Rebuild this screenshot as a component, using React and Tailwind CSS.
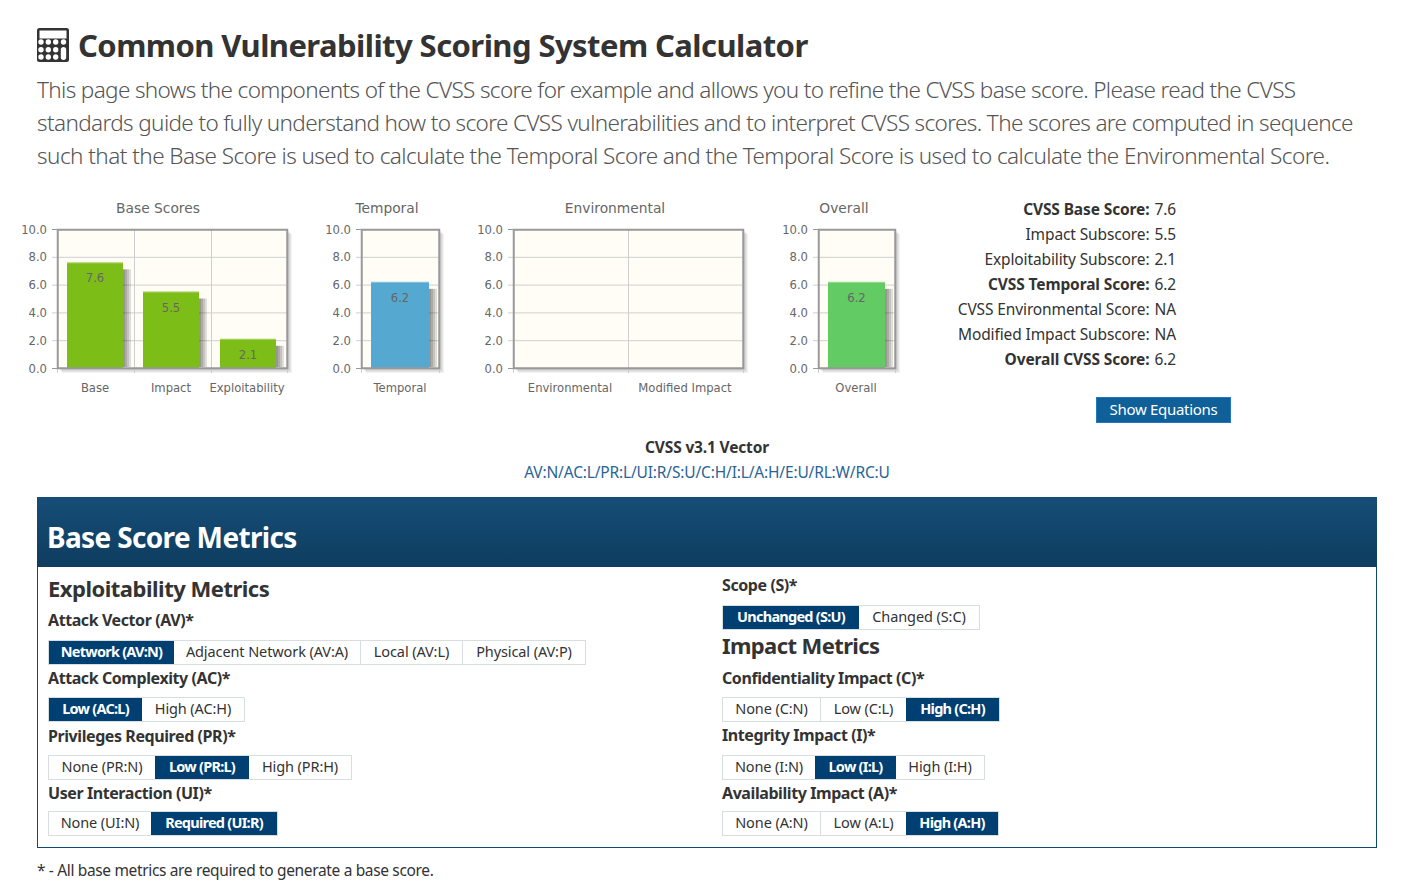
import React from 'react';

const axisTicks = ['10.0', '8.0', '6.0', '4.0', '2.0', '0.0'];

// plot area is 139px tall, 0 to 10
const Chart = ({ title, titleX, width, plotLeft, plotWidth, cols, bars = [] }) => {
  const top = 29;
  const h = 139;
  const right = plotLeft + plotWidth;
  return (
    <svg width={width} height={200} className="shrink-0 block" style={{ fontFamily: '"DejaVu Sans", sans-serif' }}>
      <text x={titleX} y={13} textAnchor="middle" fontSize="13.8" fill="#666">{title}</text>
      {[5, 4, 3, 2].map((o) => (
        <rect key={o} x={plotLeft + o} y={top + o} width={plotWidth} height={h} fill="#000" opacity="0.05" />
      ))}
      <rect x={plotLeft} y={top} width={plotWidth} height={h} fill="#fffdf6" />
      {axisTicks.map((t, i) => {
        const y = top + (h * i) / 5;
        return (
          <g key={t}>
            <line x1={plotLeft - 5} x2={right} y1={y + 0.5} y2={y + 0.5} stroke={i === 0 || i === 5 ? '#999' : '#cfcfcf'} />
            <text x={plotLeft - 10} y={y + 4.5} textAnchor="end" fontSize="11.6" fill="#666">{t}</text>
          </g>
        );
      })}
      {cols.map((c) => (
        <g key={c.label}>
          {c.line && <line x1={c.line + 0.5} x2={c.line + 0.5} y1={top} y2={top + h} stroke="#cfcfcf" />}
          {c.line && <line x1={c.line + 0.5} x2={c.line + 0.5} y1={top + h} y2={top + h + 5} stroke="#ccc" />}
          <text x={c.x} y={192} textAnchor="middle" fontSize="11.6" fill="#666">{c.label}</text>
        </g>
      ))}
      <line x1={plotLeft + 0.5} x2={plotLeft + 0.5} y1={top + h} y2={top + h + 5} stroke="#ccc" />
      <line x1={right + 0.5} x2={right + 0.5} y1={top + h} y2={top + h + 5} stroke="#ccc" />
      {bars.map((b) => {
        const bh = (h * b.value) / 10;
        return (
          <g key={b.x}>
            {[8, 6, 4, 2].map((o) => (
              <rect key={o} x={b.x + 2} y={top + h - bh + 7} width={b.w - 2 + o} height={bh - 8} fill="#000" opacity="0.12" />
            ))}
            <rect x={b.x} y={top + h - bh} width={b.w} height={bh} fill={b.color} />
            <line x1={b.x} x2={b.x + b.w} y1={top + h - bh + 0.5} y2={top + h - bh + 0.5} stroke="#fff" opacity="0.35" />
            <text x={b.x + b.w / 2} y={top + h - bh + 20} textAnchor="middle" fontSize="11.6" fill="#666">{b.value.toFixed(1)}</text>
          </g>
        );
      })}
      <rect x={plotLeft + 0.75} y={top + 0.75} width={plotWidth - 0.5} height={h - 0.5} fill="none" stroke="#999" strokeWidth="2" />
    </svg>
  );
};

const CalculatorIcon = () => (
  <svg width="32" height="35" viewBox="0 0 32 35" className="shrink-0">
    <rect x="0" y="0" width="32" height="34" rx="2.5" fill="#333" />
    <rect x="2.5" y="2.5" width="27" height="8" fill="#fff" />
    {[4, 11.3, 18.7].map((x) =>
      [14, 21.7, 29].map((y) => <circle key={`${x}-${y}`} cx={x} cy={y} r="2.7" fill="#fff" />)
    )}
    <circle cx="26.5" cy="14" r="2.7" fill="#fff" />
    <rect x="23.8" y="19" width="5.4" height="13" rx="2.7" fill="#fff" />
  </svg>
);

const Segments = ({ items }) => (
  <div className="flex w-fit border border-[#d6dee0] text-[14.5px] leading-[21px] h-[25px]">
    {items.map(([label, w, on], i) => (
      <span
        key={label}
        style={{ width: w }}
        className={
          on
            ? 'text-center whitespace-nowrap bg-[#003f72] text-white font-bold tracking-[-0.75px]'
            : `text-center whitespace-nowrap text-[#333] tracking-[-0.1px] ${i > 0 && !items[i - 1][2] ? 'border-l border-[#d6dee0]' : ''}`
        }
      >
        {label}
      </span>
    ))}
  </div>
);

const Metric = ({ label, items, mt }) => (
  <div>
    <h4 className={`text-[16px] leading-[24px] font-bold tracking-[-0.42px] text-[#333] ${mt}`}>{label}</h4>
    <Segments items={items} />
  </div>
);

const stats = [
  ['CVSS Base Score:', '7.6', true],
  ['Impact Subscore:', '5.5'],
  ['Exploitability Subscore:', '2.1'],
  ['CVSS Temporal Score:', '6.2', true],
  ['CVSS Environmental Score:', 'NA'],
  ['Modified Impact Subscore:', 'NA'],
  ['Overall CVSS Score:', '6.2', true],
];

export default function App() {
  return (
    <div className="h-[886px] overflow-hidden bg-white text-[#333] font-['Noto_Sans',sans-serif] px-[37px] pt-[28px]">
      <div className="flex items-center gap-[9px] h-[35px]">
        <CalculatorIcon />
        <h2 className="text-[31px] leading-[35px] font-bold tracking-[-0.57px] whitespace-nowrap">Common Vulnerability Scoring System Calculator</h2>
      </div>
      <p className="mt-[10px] text-[22.5px] leading-[33px] font-light text-[#555] tracking-[-0.64px] whitespace-nowrap">
        This page shows the components of the CVSS score for example and allows you to refine the CVSS base score. Please read the CVSS<br />
        <span className="tracking-[-0.625px]">standards guide to fully understand how to score CVSS vulnerabilities and to interpret CVSS scores. The scores are computed in sequence</span><br />
        <span className="tracking-[-0.54px]">such that the Base Score is used to calculate the Temporal Score and the Temporal Score is used to calculate the Environmental Score.</span>
      </p>

      <div className="flex -ml-[20px] mt-[28px] h-[230px]">
        <Chart title="Base Scores" titleX={141} width={280} plotLeft={40} plotWidth={230}
          cols={[{ label: 'Base', x: 78, line: 117 }, { label: 'Impact', x: 154, line: 194 }, { label: 'Exploitability', x: 230 }]}
          bars={[{ x: 50, w: 56, value: 7.6, color: '#7dbd18' }, { x: 126, w: 56, value: 5.5, color: '#7dbd18' }, { x: 203, w: 56, value: 2.1, color: '#7dbd18' }]} />
        <div className="ml-[24px]">
          <Chart title="Temporal" titleX={66} width={128} plotLeft={40} plotWidth={78}
            cols={[{ label: 'Temporal', x: 79 }]}
            bars={[{ x: 50, w: 58, value: 6.2, color: '#55a8d0' }]} />
        </div>
        <div className="ml-[24px]">
          <Chart title="Environmental" titleX={142} width={280} plotLeft={40} plotWidth={230}
            cols={[{ label: 'Environmental', x: 97, line: 155 }, { label: 'Modified Impact', x: 212 }]} />
        </div>
        <div className="ml-[25px]">
          <Chart title="Overall" titleX={66} width={127} plotLeft={40} plotWidth={77}
            cols={[{ label: 'Overall', x: 78 }]}
            bars={[{ x: 50, w: 57, value: 6.2, color: '#63cb63' }]} />
        </div>
        <div className="ml-[20px] w-[305px] shrink-0 text-[15.5px] leading-[25px] tracking-[-0.12px]">
          <div className="grid grid-cols-[auto_auto] justify-end gap-x-[5px] w-[251px] mt-[-3px]">
            {stats.map(([k, v, b]) => (
              <React.Fragment key={k}>
                <span className={`text-right whitespace-nowrap ${b ? 'font-bold' : ''}`}>{k}</span>
                <span>{v}</span>
              </React.Fragment>
            ))}
          </div>
          <button className="block ml-[171px] mt-[25px] w-[135px] h-[26px] pb-[2px] bg-[#0f6098] border border-[#1f78c0] text-white text-[15px] tracking-[-0.3px] leading-[22px] whitespace-nowrap">Show Equations</button>
        </div>
      </div>

      <div className="text-center text-[15.5px] leading-[25px] mt-[5px] mr-[14px] tracking-[-0.16px]">
        <div className="font-bold">CVSS v3.1 Vector</div>
        <div className="text-[#2a6496]">AV:N/AC:L/PR:L/UI:R/S:U/C:H/I:L/A:H/E:U/RL:W/RC:U</div>
      </div>

      <div className="mt-[12px] w-[1340px] h-[351px] border border-[#0f4a74]">
        <div className="h-[70px] -mt-px -mx-px bg-gradient-to-b from-[#164d77] to-[#0e3d5f] px-[10px] pt-[21px]">
          <h3 className="text-[28px] leading-[38px] font-bold tracking-[-0.65px] text-white">Base Score Metrics</h3>
        </div>
        <div className="grid grid-cols-[674px_1fr] pl-[10px]">
          <div>
            <h3 className="text-[22px] leading-[28px] font-bold tracking-[-0.5px] mt-[7px]">Exploitability Metrics</h3>
            <Metric label="Attack Vector (AV)*" mt="mt-[6px] mb-[8px]" items={[['Network (AV:N)', 125, true], ['Adjacent Network (AV:A)', 186], ['Local (AV:L)', 102], ['Physical (AV:P)', 123]]} />
            <Metric label="Attack Complexity (AC)*" mt="mt-[1px] mb-[7px]" items={[['Low (AC:L)', 93, true], ['High (AC:H)', 102]]} />
            <Metric label="Privileges Required (PR)*" mt="mt-[2px] mb-[7px]" items={[['None (PR:N)', 106], ['Low (PR:L)', 94, true], ['High (PR:H)', 102]]} />
            <Metric label="User Interaction (UI)*" mt="mt-[1px] mb-[6px]" items={[['None (UI:N)', 102], ['Required (UI:R)', 126, true]]} />
          </div>
          <div>
            <Metric label="Scope (S)*" mt="mt-[6px] mb-[8px]" items={[['Unchanged (S:U)', 136, true], ['Changed (S:C)', 120]]} />
            <h3 className="text-[22px] leading-[28px] font-bold tracking-[-0.6px] mt-[1px]">Impact Metrics</h3>
            <Metric label="Confidentiality Impact (C)*" mt="mb-[7px] mt-[7px]" items={[['None (C:N)', 97], ['Low (C:L)', 86], ['High (C:H)', 93, true]]} />
            <Metric label="Integrity Impact (I)*" mt="mt-[1px] mb-[8px]" items={[['None (I:N)', 92], ['Low (I:L)', 81, true], ['High (I:H)', 88]]} />
            <Metric label="Availability Impact (A)*" mt="mt-[1px] mb-[6px]" items={[['None (A:N)', 97], ['Low (A:L)', 86], ['High (A:H)', 92, true]]} />
          </div>
        </div>
      </div>
      <p className="mt-[11px] text-[15.5px] leading-[22px] tracking-[-0.35px]">* - All base metrics are required to generate a base score.</p>
    </div>
  );
}
